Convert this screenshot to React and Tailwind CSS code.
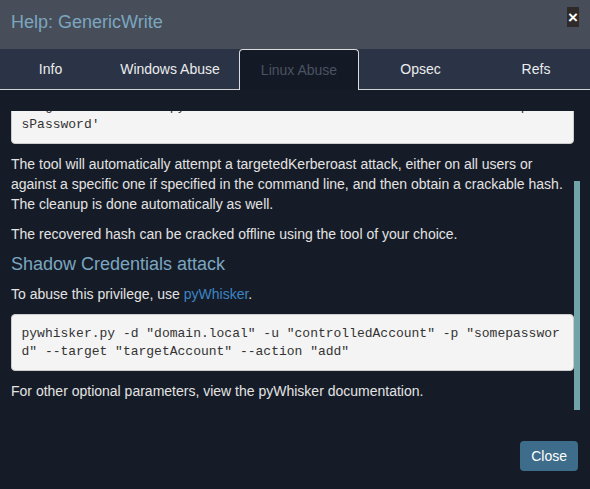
import React, { useEffect, useRef } from "react";

const tabs = [
  { label: "Info", width: "w-[101px]" },
  { label: "Windows Abuse", width: "w-[138px]" },
  { label: "Linux Abuse", width: "w-[120px]", active: true },
  { label: "Opsec", width: "w-[123px]" },
  { label: "Refs", width: "flex-1" },
];

const CodeBlock = React.forwardRef(({ children }, ref) => (
  <pre
    ref={ref}
    className="mb-[10px] rounded-[4px] border border-[#cccccc] bg-[#f4f4f4] p-[9.5px] text-[13px] leading-[18px] text-[#333333] break-all whitespace-pre-wrap"
    style={{ fontFamily: '"Liberation Mono", "DejaVu Sans Mono", monospace' }}
  >
    {children}
  </pre>
));

const App = () => {
  const scrollRef = useRef(null);
  const preRef = useRef(null);

  useEffect(() => {
    // first command block sits 24px above the visible top, as in the screenshot
    const box = scrollRef.current;
    const pre = preRef.current;
    if (box && pre) {
      box.scrollTop = pre.offsetTop + 24;
    }
  }, []);

  return (
    <div
      className="flex h-[489px] w-[590px] flex-col bg-[#161c27] text-[14px] leading-[20px] text-[#e3e3e3]"
      style={{ fontFamily: '"Liberation Sans", Arial, sans-serif' }}
    >
      {/* Header */}
      <div className="flex h-[49px] items-start justify-between bg-[#474e59] pl-[11px] pr-[11px]">
        <h3 className="pt-[11px] text-[18px] leading-[22px] text-[#7ba6c0]">Help: GenericWrite</h3>
        <button className="mt-[7px] flex h-[20px] w-[12px] items-center justify-center bg-[#2e2a2a] text-[17px] font-bold leading-none text-white">
          ×
        </button>
      </div>

      {/* Tabs */}
      <div className="flex h-[41px] bg-[#2a3446]">
        {tabs.map((tab) =>
          tab.active ? (
            <div
              key={tab.label}
              className={`${tab.width} flex items-center justify-center rounded-t-[4px] border border-b-0 border-[#dcdcdc] bg-[#141a25] text-[#4b5261]`}
            >
              {tab.label}
            </div>
          ) : (
            <div
              key={tab.label}
              className={`${tab.width} flex items-center justify-center border-b border-[#d2d2d2] text-[#ececec]`}
            >
              {tab.label}
            </div>
          )
        )}
      </div>

      {/* Body */}
      <div className="flex pl-[11px] pt-[21px]">
        <div ref={scrollRef} className="relative h-[300px] w-[563px] overflow-hidden">
          <h4 className="mt-[10px] mb-[10px] text-[18px] leading-[20px] text-[#7ba6c0]">Targeted Kerberoast</h4>
          <p className="mb-[10px]">
            A targeted kerberoast attack can be performed using{" "}
            <span className="text-[#3d84c4]">targetedKerberoast.py</span>.
          </p>
          <CodeBlock ref={preRef}>
            targetedKerberoast.py -v -d 'domain.local' -u 'controlledUser' -p 'ItsPassword'
          </CodeBlock>
          <p className="mb-[10px]">
            The tool will automatically attempt a targetedKerberoast attack, either on all users or against a
            specific one if specified in the command line, and then obtain a crackable hash. The cleanup is done
            automatically as well.
          </p>
          <p className="mb-[10px]">The recovered hash can be cracked offline using the tool of your choice.</p>
          <h4 className="mt-[10px] mb-[10px] text-[18px] leading-[20px] text-[#7ba6c0]">
            Shadow Credentials attack
          </h4>
          <p className="mb-[10px]">
            To abuse this privilege, use <span className="text-[#3d84c4]">pyWhisker</span>.
          </p>
          <CodeBlock>
            pywhisker.py -d "domain.local" -u "controlledAccount" -p "somepassword" --target "targetAccount" --action
            "add"
          </CodeBlock>
          <p className="mb-[10px]">For other optional parameters, view the pyWhisker documentation.</p>
        </div>
        {/* scrollbar */}
        <div className="h-[300px] w-[6px]">
          <div className="mt-[70px] h-[229px] w-[6px] bg-[#71a3a8]"></div>
        </div>
      </div>

      {/* Footer */}
      <div className="flex justify-end pr-[12px] pt-[30px]">
        <button className="rounded-[4px] bg-[#3e6c8b] px-[11px] py-[5px] text-[14px] leading-[20px] text-white">
          Close
        </button>
      </div>
    </div>
  );
};

export default App;
